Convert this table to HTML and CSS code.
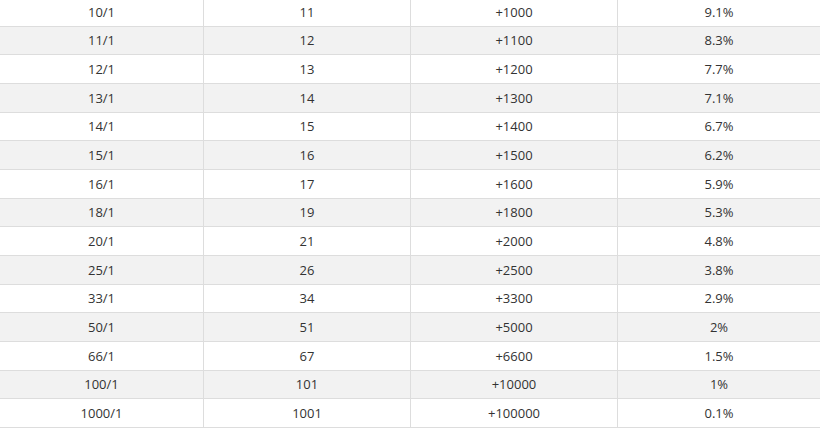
FILE: index.html
```html
<!DOCTYPE html>
<html>
<head>
<meta charset="utf-8">
<link rel="stylesheet" href="styles.css">
</head>
<body>
<div class="wrap">
<table class="odds">
<colgroup><col class="c1"><col class="c2"><col class="c3"><col class="c4"></colgroup>
<tbody>
<tr><td>10/1</td><td>11</td><td>+1000</td><td>9.1%</td></tr>
<tr><td>11/1</td><td>12</td><td>+1100</td><td>8.3%</td></tr>
<tr><td>12/1</td><td>13</td><td>+1200</td><td>7.7%</td></tr>
<tr><td>13/1</td><td>14</td><td>+1300</td><td>7.1%</td></tr>
<tr><td>14/1</td><td>15</td><td>+1400</td><td>6.7%</td></tr>
<tr><td>15/1</td><td>16</td><td>+1500</td><td>6.2%</td></tr>
<tr><td>16/1</td><td>17</td><td>+1600</td><td>5.9%</td></tr>
<tr><td>18/1</td><td>19</td><td>+1800</td><td>5.3%</td></tr>
<tr><td>20/1</td><td>21</td><td>+2000</td><td>4.8%</td></tr>
<tr><td>25/1</td><td>26</td><td>+2500</td><td>3.8%</td></tr>
<tr><td>33/1</td><td>34</td><td>+3300</td><td>2.9%</td></tr>
<tr><td>50/1</td><td>51</td><td>+5000</td><td>2%</td></tr>
<tr><td>66/1</td><td>67</td><td>+6600</td><td>1.5%</td></tr>
<tr><td>100/1</td><td>101</td><td>+10000</td><td>1%</td></tr>
<tr><td>1000/1</td><td>1001</td><td>+100000</td><td>0.1%</td></tr>
</tbody>
</table>
</div>
</body>
</html>
```
FILE: styles.css
```css
html, body {
  margin: 0;
  padding: 0;
  background: #ffffff;
}
.wrap {
  overflow: hidden;
  height: 433px;
}
.odds {
  width: 820px;
  margin-top: -2px;
  border-collapse: separate;
  border-spacing: 0;
  table-layout: fixed;
  font-family: "Open Sans", "Segoe UI", sans-serif;
  font-size: 13px;
  color: #333333;
}
.c1 { width: 203px; }
.c2 { width: 207px; }
.c3 { width: 207px; }
.c4 { width: 203px; }
.odds td {
  height: 27.67px;
  padding: 0;
  text-align: center;
  vertical-align: middle;
  border-bottom: 1px solid #dddddd;
  line-height: 18px;
  box-sizing: content-box;
}
.odds td + td {
  border-left: 1px solid #dddddd;
}
.odds tr:nth-child(even) td {
  background: #f2f2f2;
}
```
